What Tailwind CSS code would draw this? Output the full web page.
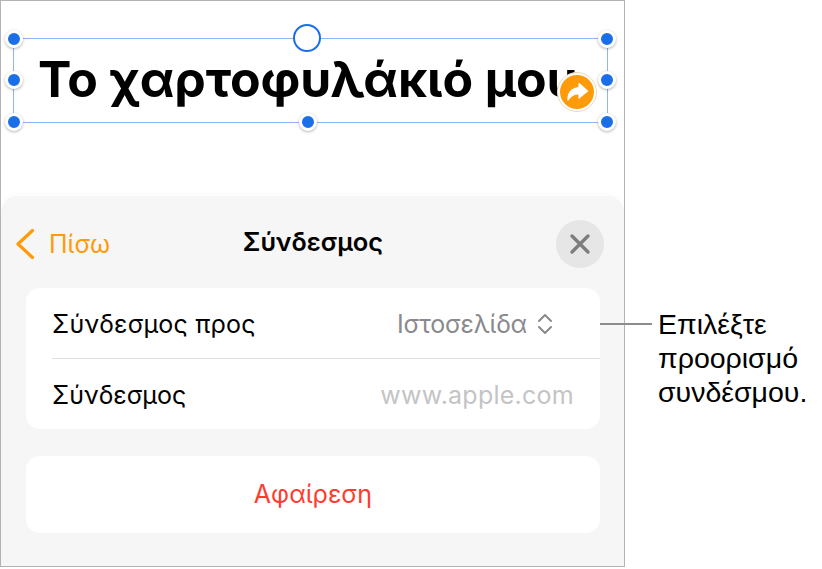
<!DOCTYPE html>
<html>
<head>
    <meta charset="UTF-8">
    <title>Σύνδεσμος</title>
    <script src="https://cdn.jsdelivr.net/npm/@tailwindcss/browser@4"></script>
</head>
<body class="bg-white w-[822px] h-[569px] overflow-hidden font-['Inter',sans-serif]">
    <div class="flex items-start">
        <!-- device -->
        <div class="w-[625px] h-[567px] border border-[#b3b3b3] flex flex-col shrink-0 overflow-hidden">
            <div class="h-[195px] shrink-0 pt-[37px] pl-[12px]">
                <!-- selected text box -->
                <div class="relative w-[595px] h-[85px] border-[1.5px] border-[#8fb4f8] flex items-center pl-[24px] pb-[3px]">
                    <span class="text-[50px] leading-none font-bold text-black whitespace-nowrap tracking-[-0.1px]">Το χαρτοφυλάκιό μου</span>

                    <div class="absolute -left-[9px] -top-[9px] w-[18px] h-[18px] rounded-full bg-[#1a6fe8] border-[3px] border-white shadow-[0_1px_3px_rgba(0,0,0,0.3)]"></div>
                    <div class="absolute -right-[9px] -top-[9px] w-[18px] h-[18px] rounded-full bg-[#1a6fe8] border-[3px] border-white shadow-[0_1px_3px_rgba(0,0,0,0.3)]"></div>
                    <div class="absolute -left-[9px] top-[32px] w-[18px] h-[18px] rounded-full bg-[#1a6fe8] border-[3px] border-white shadow-[0_1px_3px_rgba(0,0,0,0.3)]"></div>
                    <div class="absolute -right-[9px] top-[32px] w-[18px] h-[18px] rounded-full bg-[#1a6fe8] border-[3px] border-white shadow-[0_1px_3px_rgba(0,0,0,0.3)]"></div>
                    <div class="absolute -left-[9px] -bottom-[9px] w-[18px] h-[18px] rounded-full bg-[#1a6fe8] border-[3px] border-white shadow-[0_1px_3px_rgba(0,0,0,0.3)]"></div>
                    <div class="absolute -right-[9px] -bottom-[9px] w-[18px] h-[18px] rounded-full bg-[#1a6fe8] border-[3px] border-white shadow-[0_1px_3px_rgba(0,0,0,0.3)]"></div>
                    <div class="absolute left-[285px] -bottom-[9px] w-[18px] h-[18px] rounded-full bg-[#1a6fe8] border-[3px] border-white shadow-[0_1px_3px_rgba(0,0,0,0.3)]"></div>

                    <!-- rotate handle -->
                    <div class="absolute left-[279px] -top-[15px] w-[28px] h-[28px] rounded-full bg-white border-[2px] border-[#1a6fe8]"></div>

                    <!-- link badge -->
                    <div class="absolute left-[543px] top-[33px] w-10 h-10 rounded-full bg-white border border-[#ecd9c0] flex items-center justify-center">
                        <div class="w-[34px] h-[34px] rounded-full bg-[#ff9a0a] flex items-center justify-center">
                            <svg width="24" height="22" viewBox="0 0 24 22"><path d="M14 2.5 L22.5 10 L14 17 L14 13 C9.5 12.8 6 14.5 3 19 C2.6 12 6.5 7 14 6.5 Z" fill="#fff" stroke="#fff" stroke-width="1.2" stroke-linejoin="round"/></svg>
                        </div>
                    </div>
                </div>
            </div>

            <!-- panel -->
            <div class="flex-1 bg-[#f6f6f6] rounded-t-[16px] pl-[25px] pr-[24px] shadow-[0_-2px_6px_rgba(0,0,0,0.02)]">
                <div class="relative h-[92px] flex items-center justify-center">
                    <div class="absolute -left-[11px] top-[32px] flex items-center gap-[14px] text-[#ff9a0a]">
                        <svg width="20" height="32" viewBox="0 0 20 32" fill="none"><path d="M17.5 2.5 L3 16 L17.5 29.5" stroke="#ff9a0a" stroke-width="3.2" stroke-linecap="round" stroke-linejoin="round"/></svg>
                        <span class="text-[25px] leading-none">Πίσω</span>
                    </div>
                    <span class="text-[25.5px] leading-none font-semibold text-black">Σύνδεσμος</span>
                    <div class="absolute right-[-4px] top-[24px] w-12 h-12 rounded-full bg-[#e6e6e6] flex items-center justify-center">
                        <svg width="22" height="22" viewBox="0 0 22 22" fill="none"><path d="M3 3 L19 19 M19 3 L3 19" stroke="#7d7d7f" stroke-width="3.4" stroke-linecap="round"/></svg>
                    </div>
                </div>

                <div class="bg-white rounded-[14px] h-[141px] pl-[26px] text-[25px] leading-none">
                    <div class="h-[71px] border-b border-[#e0e0e0] flex items-center justify-between pt-[2px]">
                        <span class="text-black tracking-[0.2px]">Σύνδεσμος προς</span>
                        <div class="flex items-center gap-[10px] pr-[47px] text-[#8a8a8e]">
                            <span class="tracking-[-0.2px]">Ιστοσελίδα</span>
                            <svg width="16" height="24" viewBox="0 0 16 24" fill="none"><path d="M2 9 L8 3 L14 9 M2 15 L8 21 L14 15" stroke="#8a8a8e" stroke-width="2" stroke-linecap="round" stroke-linejoin="round"/></svg>
                        </div>
                    </div>
                    <div class="h-[70px] flex items-center justify-between pr-[26px] pt-[2px]">
                        <span class="text-black">Σύνδεσμος</span>
                        <span class="text-[#c4c4c6] tracking-[0.25px]">www.apple.com</span>
                    </div>
                </div>

                <div class="bg-white rounded-[14px] h-[77px] mt-[27px] flex items-center justify-center text-[25px] leading-none text-[#ff3b30]">Αφαίρεση</div>
            </div>
        </div>

        <!-- callout -->
        <div class="flex items-start pt-[307px] -ml-[25px] relative">
            <div class="w-[52px] h-[2px] bg-[#8c8c8c] mt-[16px]"></div>
            <p class="ml-[6px] text-[28.5px] leading-[34px] text-black font-['Liberation_Sans',sans-serif]">Επιλέξτε<br>προορισμό<br>συνδέσμου.</p>
        </div>
    </div>
</body>
</html>
